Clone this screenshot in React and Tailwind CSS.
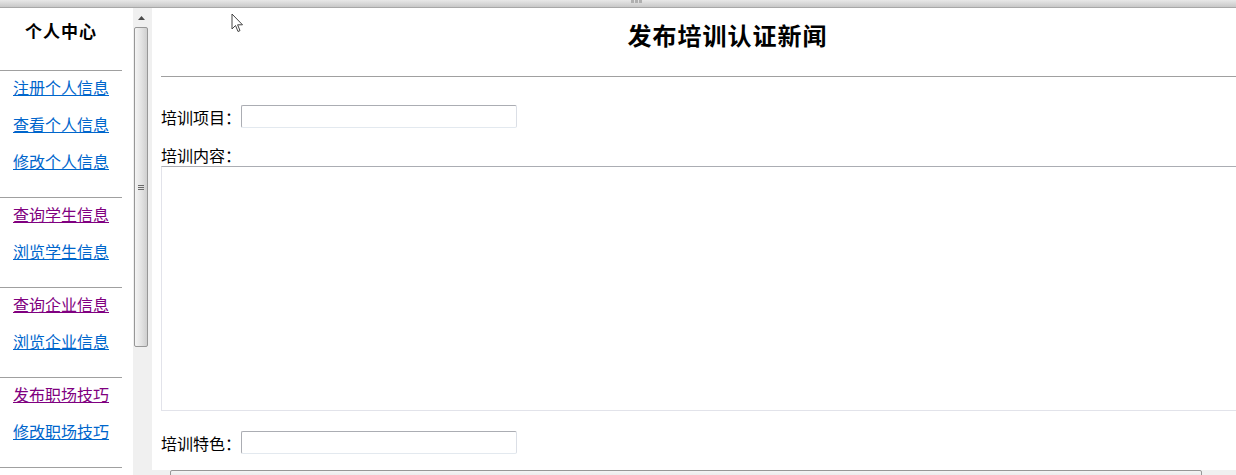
const groups = [
  [
    { t: '注册个人信息', v: false },
    { t: '查看个人信息', v: false },
    { t: '修改个人信息', v: false },
  ],
  [
    { t: '查询学生信息', v: true },
    { t: '浏览学生信息', v: false },
  ],
  [
    { t: '查询企业信息', v: true },
    { t: '浏览企业信息', v: false },
  ],
  [
    { t: '发布职场技巧', v: true },
    { t: '修改职场技巧', v: false },
  ],
];

const font = { fontFamily: '"Noto Sans CJK SC", "Noto Sans", sans-serif' };

function Sidebar() {
  return (
    <div className="w-[133px] shrink-0 bg-white overflow-hidden">
      <div className="w-[122px]">
        <div className="pt-[11px] pb-[27px] leading-[24px] text-center text-[17px] font-bold text-black tracking-[1px]">
          个人中心
        </div>
        {groups.map((g, i) => (
          <div key={i}>
            <div className="border-t border-[#a0a0a0]" />
            <div className="pt-[4px] pb-[11px]">
              {g.map((l) => (
                <div key={l.t} className="h-[37px] pl-[13px]">
                  <a
                    href="#"
                    className={`text-[16px] leading-[20px] underline ${l.v ? 'text-[#800080]' : 'text-[#0066cc]'}`}
                  >
                    {l.t}
                  </a>
                </div>
              ))}
            </div>
          </div>
        ))}
        <div className="border-t border-[#a0a0a0]" />
      </div>
    </div>
  );
}

function VScroll() {
  return (
    <div className="w-[16px] shrink-0 bg-[#f0f0f0] flex flex-col px-[1px]">
      <div className="h-[19px] flex items-center justify-center">
        <svg width="7" height="4" viewBox="0 0 7 4">
          <path d="M3.5 0 L7 4 L0 4 Z" fill="#4a4a4a" />
        </svg>
      </div>
      <div className="h-[320px] rounded-[2px] border border-[#979797] bg-gradient-to-r from-[#f4f4f4] via-[#e4e4e4] to-[#cfcfcf] flex items-center justify-center">
        <div className="flex flex-col gap-[1px]">
          <div className="w-[6px] h-[1px] bg-[#6a6a6a]" />
          <div className="w-[6px] h-[1px] bg-[#6a6a6a]" />
          <div className="w-[6px] h-[1px] bg-[#6a6a6a]" />
        </div>
      </div>
    </div>
  );
}

function Field({ label }) {
  return (
    <div className="flex items-center h-[23px] text-[16px] text-black">
      <span className="w-[80px] leading-[20px]">{label}</span>
      <input className="w-[276px] h-[23px] rounded-[2px] border border-[#abadb3] border-b-[#e3e9ef] border-r-[#dbdfe6] bg-white outline-none" />
    </div>
  );
}

function Main() {
  return (
    <div className="flex-1 min-w-0 overflow-hidden flex flex-col border-l-[3px] border-[#f0f0f0]">
      <div className="h-[462px] shrink-0 overflow-hidden bg-white">
        <div className="w-[1142px] pl-[9px]">
          <div className="pt-[11px] h-[44px] leading-[32px] text-center text-[24px] font-bold text-black tracking-[1px]">
            发布培训认证新闻
          </div>
          <div className="mt-[24px] w-[1150px] border-t border-[#a0a0a0]" />
          <div className="mt-[28px]">
            <Field label="培训项目：" />
          </div>
          <div className="mt-[17px] h-[20px] leading-[20px] text-[16px] text-black">培训内容：</div>
          <textarea className="block mt-[1px] w-[1130px] h-[245px] resize-none border border-[#e2e3ea] border-t-[#abadb3] bg-white outline-none" />
          <div className="mt-[20px]">
            <Field label="培训特色：" />
          </div>
        </div>
      </div>
      <div className="h-[17px] shrink-0 bg-[#f0f0f0] flex">
        <div className="w-[18px] shrink-0" />
        <div className="w-[1032px] shrink-0 rounded-[2px] border border-[#979797] bg-gradient-to-b from-[#f4f4f4] to-[#d6d6d6]" />
      </div>
    </div>
  );
}

export default function App() {
  return (
    <div className="relative w-[1236px] h-[475px] overflow-hidden bg-white flex flex-col" style={font}>
      <div className="h-[8px] shrink-0 bg-gradient-to-b from-[#e8e8e8] to-[#c8c8c8] border-b border-[#a8a8a8] flex justify-center">
        <div className="flex gap-[1px] ml-[37px]">
          <div className="w-[3px] h-[3px] bg-[#b0b0b0]" />
          <div className="w-[3px] h-[3px] bg-[#b0b0b0]" />
          <div className="w-[3px] h-[3px] bg-[#b0b0b0]" />
        </div>
      </div>
      <div className="flex flex-1 min-h-0 overflow-hidden">
        <Sidebar />
        <VScroll />
        <Main />
      </div>
      <svg className="absolute left-[231px] top-[13px]" width="13" height="20" viewBox="0 0 13 20">
        <path d="M1 1 L1 16 L4.5 12.5 L7 18.5 L9 17.6 L6.6 11.8 L11.5 11.8 Z" fill="white" stroke="#444" strokeWidth="1" strokeLinejoin="round" />
      </svg>
    </div>
  );
}
